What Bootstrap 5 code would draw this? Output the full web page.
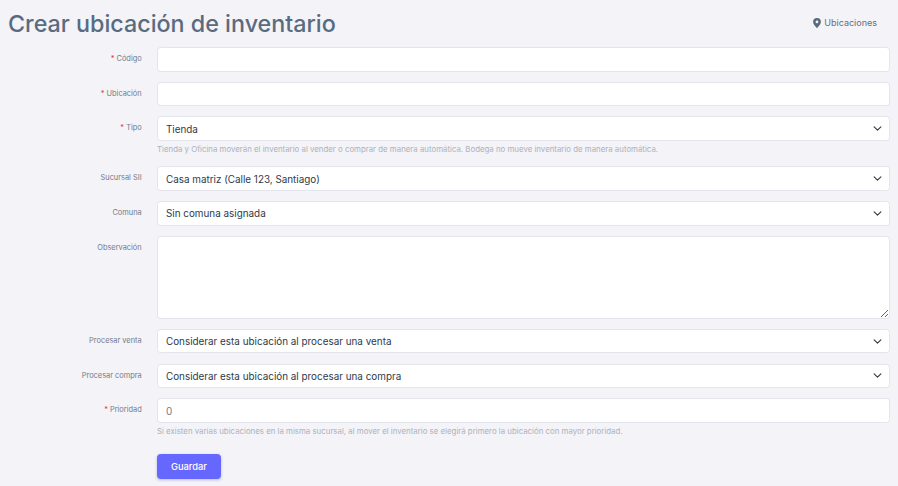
<!DOCTYPE html>
<html lang="es">
<head>
<meta charset="utf-8">
<title>Crear ubicación de inventario</title>
<link href="https://cdn.jsdelivr.net/npm/bootstrap@5.3.0/dist/css/bootstrap.min.css" rel="stylesheet">
<style>
html,body{height:486px;overflow:hidden}
body{background:#f3f3f8;font-family:Inter,"Liberation Sans",sans-serif;color:#5a6b80}
.page-head{padding-top:9px;height:47px}
.page-title{font-size:23.3px;line-height:29px;font-weight:500;color:#5a6b80;margin:0}
.head-link{font-size:9px;color:#666f7e;text-decoration:none;margin-right:13px;margin-top:7px;gap:3px}
.form-row{margin-bottom:10.1px}
.form-row.tight{margin-bottom:0}
.lbl{font-size:7.4px;line-height:12px;color:#737a88;text-align:right;padding-top:6px}
.lbl span{color:#e5343d}
.form-control.fld,.form-select.fld{width:calc(100% + .7px);margin-left:-.7px;height:24.6px;min-height:0;font-size:9.9px;line-height:14px;padding:4px 8px;border:1px solid #e4e5ec;border-radius:3.5px;color:#2e3a4a;background-color:#fff}
.form-select.fld{background-size:11px 9px;background-position:right 6px center;padding-right:24px;padding-left:8px}
textarea.form-control.fld{height:83px}
.form-control.fld.num{color:#777c84}
.hint{font-size:7.85px;line-height:10px;color:#adb2bb;margin-top:3px;margin-bottom:12.4px;margin-left:-.7px}
.btn.save{background:#6667ff;border:1px solid #6667ff;color:#fff;font-size:9.3px;font-weight:500;height:25px;width:64px;padding:0;border-radius:3.5px;box-shadow:0 1px 3px rgba(80,80,160,.35);margin-top:6px;margin-left:-.7px}
</style>
</head>
<body>
<div class="container-fluid px-2">
  <div class="page-head d-flex justify-content-between align-items-start">
    <h1 class="page-title">Crear ubicación de inventario</h1>
    <a href="#" class="head-link d-flex align-items-center">
      <svg width="8" height="10" viewBox="0 0 8 10" aria-hidden="true"><path fill-rule="evenodd" fill="#5a6b80" d="M4 0a3.9 3.9 0 0 1 3.9 3.9C7.900 6.300 4 10 4 10S.1 6.300.1 3.900A3.900 3.900 0 0 1 4 0Zm0 2.500a1.400 1.400 0 1 0 0 2.800 1.400 1.400 0 0 0 0-2.800Z"/></svg>
      Ubicaciones
    </a>
  </div>
  <form>
    <div class="row gx-3 form-row">
      <label class="col-2 lbl"><span>*</span> Código</label>
      <div class="col-10"><input class="form-control fld" type="text"></div>
    </div>
    <div class="row gx-3 form-row">
      <label class="col-2 lbl"><span>*</span> Ubicación</label>
      <div class="col-10"><input class="form-control fld" type="text"></div>
    </div>
    <div class="row gx-3 form-row tight">
      <label class="col-2 lbl"><span>*</span> Tipo</label>
      <div class="col-10">
        <select class="form-select fld"><option>Tienda</option></select>
        <div class="hint">Tienda y Oficina moverán el inventario al vender o comprar de manera automática. Bodega no mueve inventario de manera automática.</div>
      </div>
    </div>
    <div class="row gx-3 form-row">
      <label class="col-2 lbl">Sucursal SII</label>
      <div class="col-10"><select class="form-select fld"><option>Casa matriz (Calle 123, Santiago)</option></select></div>
    </div>
    <div class="row gx-3 form-row">
      <label class="col-2 lbl">Comuna</label>
      <div class="col-10"><select class="form-select fld"><option>Sin comuna asignada</option></select></div>
    </div>
    <div class="row gx-3 form-row">
      <label class="col-2 lbl">Observación</label>
      <div class="col-10"><textarea class="form-control fld"></textarea></div>
    </div>
    <div class="row gx-3 form-row">
      <label class="col-2 lbl">Procesar venta</label>
      <div class="col-10"><select class="form-select fld"><option>Considerar esta ubicación al procesar una venta</option></select></div>
    </div>
    <div class="row gx-3 form-row">
      <label class="col-2 lbl">Procesar compra</label>
      <div class="col-10"><select class="form-select fld"><option>Considerar esta ubicación al procesar una compra</option></select></div>
    </div>
    <div class="row gx-3 form-row tight">
      <label class="col-2 lbl"><span>*</span> Prioridad</label>
      <div class="col-10">
        <input class="form-control fld num" type="text" value="0">
        <div class="hint">Si existen varias ubicaciones en la misma sucursal, al mover el inventario se elegirá primero la ubicación con mayor prioridad.</div>
      </div>
    </div>
    <div class="row gx-3">
      <div class="col-10 offset-2"><button type="button" class="btn save">Guardar</button></div>
    </div>
  </form>
</div>
<script src="https://cdn.jsdelivr.net/npm/bootstrap@5.3.0/dist/js/bootstrap.bundle.min.js"></script>
</body>
</html>
